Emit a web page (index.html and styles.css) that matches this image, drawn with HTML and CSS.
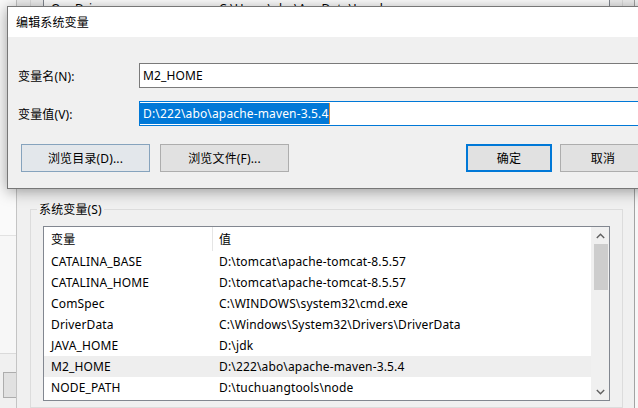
FILE: index.html
```html
<!DOCTYPE html>
<html lang="zh-CN">
<head>
<meta charset="utf-8">
<title>编辑系统变量</title>
<link rel="stylesheet" href="styles.css">
</head>
<body>
<div class="desk">
  <div class="sidewin">
    <div class="side-top"></div>
    <div class="side-mid"></div>
    <div class="side-low"><div class="side-btn"></div></div>
  </div>
  <div class="envwin">
    <div class="ugroup">
      <div class="ulist">
        <div class="urow"><span class="c1">OneDrive</span><span class="c2">C:\Users\abo\AppData\Local</span></div>
      </div>
    </div>
    <fieldset class="group">
      <legend>系统变量(S)</legend>
      <div class="listbox">
        <div class="listbody">
          <div class="lhead"><span class="c1">变量</span><span class="c2">值</span></div>
          <div class="row"><span class="c1">CATALINA_BASE</span><span class="c2">D:\tomcat\apache-tomcat-8.5.57</span></div>
          <div class="row"><span class="c1">CATALINA_HOME</span><span class="c2">D:\tomcat\apache-tomcat-8.5.57</span></div>
          <div class="row"><span class="c1">ComSpec</span><span class="c2">C:\WINDOWS\system32\cmd.exe</span></div>
          <div class="row"><span class="c1">DriverData</span><span class="c2">C:\Windows\System32\Drivers\DriverData</span></div>
          <div class="row"><span class="c1">JAVA_HOME</span><span class="c2">D:\jdk</span></div>
          <div class="row sel"><span class="c1">M2_HOME</span><span class="c2">D:\222\abo\apache-maven-3.5.4</span></div>
          <div class="row"><span class="c1">NODE_PATH</span><span class="c2">D:\tuchuangtools\node</span></div>
        </div>
        <div class="vscroll">
          <div class="sbtn"><svg width="9" height="6" viewBox="0 0 9 6"><polyline points="0.8,5 4.5,1.3 8.2,5" fill="none" stroke="#606060" stroke-width="1.4"/></svg></div>
          <div class="strack"><div class="thumb"></div></div>
          <div class="sbtn"><svg width="9" height="6" viewBox="0 0 9 6"><polyline points="0.8,1 4.5,4.7 8.2,1" fill="none" stroke="#606060" stroke-width="1.4"/></svg></div>
        </div>
      </div>
    </fieldset>
  </div>
  <div class="farwin"></div>
</div>

<div class="dialog">
  <div class="dlg-title">编辑系统变量</div>
  <div class="dlg-body">
    <div class="field">
      <span class="lbl">变量名(N):</span>
      <div class="edit"><span class="etext">M2_HOME</span></div>
    </div>
    <div class="field field2">
      <span class="lbl">变量值(V):</span>
      <div class="edit focus"><span class="selected">D:\222\abo\apache-maven-3.5.4</span><span class="caret"></span></div>
    </div>
    <div class="btnrow">
      <div class="btn hot">浏览目录(D)...</div>
      <div class="btn b2">浏览文件(F)...</div>
      <div class="spacer"></div>
      <div class="btn small def">确定</div>
      <div class="btn small cancel">取消</div>
    </div>
  </div>
</div>
</body>
</html>
```

FILE: styles.css
```css
* { box-sizing: border-box; }
html, body { margin: 0; padding: 0; }
body {
  width: 638px;
  height: 408px;
  overflow: hidden;
  position: relative;
  background: #f0f0f0;
  font-family: "Noto Sans", "Noto Sans CJK SC", sans-serif;
  font-size: 12px;
  letter-spacing: 0.15px;
  color: #000;
}

.desk { display: flex; height: 408px; }

/* window far left */
.sidewin {
  width: 17px;
  flex: none;
  border-right: 1px solid #c4c4c4;
  display: flex;
  flex-direction: column;
}
.side-top { height: 236px; background: #fafafa; border-bottom: 1px solid #e2e2e2; }
.side-mid { height: 118px; background: #f7f7f7; border-bottom: 1px solid #dadada; }
.side-low { flex: 1; background: #f0f0f0; padding: 18px 0 0 3px; }
.side-btn { height: 26px; background: #e1e1e1; border: 1px solid #adadad; border-right: none; }

/* environment variables window */
.envwin {
  width: 618px;
  flex: none;
  border-right: 1px solid #a3a3a3;
  background: #f0f0f0;
  display: flex;
  flex-direction: column;
}
.ugroup {
  margin: 0 11px 0 13px;
  height: 20px;
  border: 1px solid #dcdcdc;
  border-top: none;
  padding: 0 12px;
}
.ulist {
  height: 100%;
  background: #fff;
  border-left: 1px solid #828790;
  border-right: 1px solid #828790;
  overflow: hidden;
}
.urow { display: flex; height: 18px; align-items: center; line-height: 10px; }

.group {
  margin: 180px 11px 0 13px;
  border: 1px solid #dcdcdc;
  padding: 8px 12px 0 12px;
  min-width: 0;
  flex: 1;
}
.group legend {
  margin-left: -6px;
  padding: 2px 2px 0;
  line-height: 16px;
}

.listbox {
  display: flex;
  height: 175px;
  border: 1px solid #828790;
  background: #fff;
}
.listbody { flex: 1; overflow: hidden; }
.lhead { display: flex; height: 24px; align-items: stretch; }
.lhead .c1 { border-right: 1px solid #e5e5e5; display: flex; align-items: center; }
.lhead .c2 { display: flex; align-items: center; }
.row { display: flex; height: 21px; align-items: center; white-space: nowrap; }
.row.sel { background: #eeeeee; }
.c1 { width: 169px; flex: none; padding-left: 7px; white-space: nowrap; }
.c2 { padding-left: 6px; white-space: nowrap; }

.vscroll {
  width: 18px;
  flex: none;
  background: #f0f0f0;
  display: flex;
  flex-direction: column;
}
.sbtn { height: 17px; display: flex; align-items: center; justify-content: center; padding-left: 1px; }
.sbtn svg { display: block; }
.strack { flex: 1; padding-left: 3px; }
.thumb { width: 14px; height: 46px; background: #cdcdcd; }

.farwin { flex: 1; background: #f7f7f7; }

/* dialog */
.dialog {
  position: absolute;
  left: 7px;
  top: 6px;
  width: 651px;
  border: 1px solid #777;
  background: #f0f0f0;
  box-shadow: 0 2px 14px rgba(0, 0, 0, 0.38);
}
.dlg-title {
  height: 30px;
  background: #fff;
  display: flex;
  align-items: center;
  padding-left: 8px;
}
.dlg-body { padding: 26px 11px 16px 10px; }

.field { display: flex; align-items: center; height: 25px; }
.field2 { margin-top: 13px; }
.lbl { width: 121px; flex: none; }
.edit {
  flex: 1;
  height: 25px;
  border: 1px solid #7a7a7a;
  background: #fff;
  display: flex;
  align-items: center;
  padding-left: 3px;
}
.edit.focus { border-color: #0078d7; padding-left: 0; align-items: flex-start; }
.selected {
  display: inline-block;
  height: 21px;
  line-height: 21px;
  margin-top: 1px;
  padding: 0 1px 0 3px;
  background: #0078d7;
  color: #fff;
  white-space: nowrap;
}
.caret { width: 1px; height: 21px; margin-top: 1px; background: #d98a3a; }

.btnrow { display: flex; margin-top: 18px; height: 28px; }
.btn {
  width: 129px;
  height: 28px;
  border: 1px solid #adadad;
  background: #e1e1e1;
  display: flex;
  align-items: center;
  justify-content: center;
  white-space: nowrap;
}
.btn.hot { margin-left: 3px; background: #e3e7eb; border-color: #86a3bd; }
.btn.b2 { margin-left: 10px; }
.spacer { flex: 1; }
.btn.small { width: 86px; }
.btn.def { border: 2px solid #0078d7; }
.btn.cancel { margin-left: 8px; }
```
